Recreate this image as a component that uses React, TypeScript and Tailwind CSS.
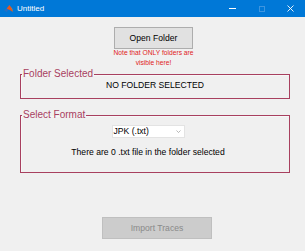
export default function App() {
  return (
    <div
      className="w-[305px] h-[251px] bg-[#f0f0f0] flex flex-col overflow-hidden"
      style={{ fontFamily: '"Liberation Sans", Arial, sans-serif' }}
    >
      {/* title bar */}
      <div className="h-[17px] bg-[#0078d7] flex items-center text-white">
        <svg className="ml-[4px] w-[9px] h-[9px]" viewBox="0 0 10 10">
          <path d="M0 7 L3 5 L5 6 L3 9 Z" fill="#2a6fc0" />
          <path d="M3 5 L6 1 L8 4 L10 9 L7 7 L5 6 Z" fill="#e8561e" />
          <path d="M6 1 L8 4 L10 9 L9 5 Z" fill="#f7a21b" />
        </svg>
        <span className="ml-[4px] text-[8px] leading-none">Untitled</span>
        <div className="ml-auto flex h-full">
          <div className="w-[29px] flex items-center justify-center">
            <div className="w-[7px] h-px bg-white" />
          </div>
          <div className="w-[29px] flex items-center justify-center">
            <div className="w-[6px] h-[6px] border border-[#3d95e0]" />
          </div>
          <div className="w-[29px] flex items-center justify-center">
            <svg className="w-[7px] h-[7px]" viewBox="0 0 7 7">
              <path d="M0.5 0.5 L6.5 6.5 M6.5 0.5 L0.5 6.5" stroke="white" strokeWidth="0.9" />
            </svg>
          </div>
        </div>
      </div>

      {/* open folder */}
      <button className="mt-[10px] ml-[114px] w-[79px] h-[22px] bg-[#e1e1e1] border border-[#adadad] text-[8.6px] text-black">
        Open Folder
      </button>
      <p className="mt-[-1px] ml-[104px] w-[99px] text-center text-[6.7px] leading-[10px] text-[#e01b1b]">
        Note that ONLY folders are
        <br />
        visible here!
      </p>

      {/* folder selected panel */}
      <fieldset className="ml-[20px] w-[270px] border border-[#a8405f] shadow-[inset_1px_1px_0_#f7f7f7] pb-[7px]">
        <legend className="ml-[1px] px-[1px] text-[10px] leading-[12px] text-[#a8405f]">Folder Selected</legend>
        <div className="text-center text-[8.6px] leading-[11px] text-black">NO FOLDER SELECTED</div>
      </fieldset>

      {/* select format panel */}
      <fieldset className="mt-[10px] ml-[20px] w-[270px] border border-[#a8405f] shadow-[inset_1px_1px_0_#f7f7f7] pb-[14px]">
        <legend className="ml-[1px] px-[1px] text-[10px] leading-[12px] text-[#a8405f]">Select Format</legend>
        <div className="w-[254px] flex flex-col items-center">
          <div className="mt-[4px] w-[73px] h-[13px] bg-white border border-[#e3e3e3] flex items-center justify-between pl-[1px] pr-[3px]">
            <span className="text-[8.6px] leading-none text-black">JPK (.txt)</span>
            <svg className="w-[5px] h-[3px]" viewBox="0 0 5 3">
              <path d="M0.5 0.5 L2.5 2.5 L4.5 0.5" fill="none" stroke="#9a9a9a" strokeWidth="0.7" />
            </svg>
          </div>
          <div className="mt-[9px] text-[8.6px] leading-[11px] text-black whitespace-nowrap">
            There are 0 .txt file in the folder selected
          </div>
        </div>
      </fieldset>

      {/* import button */}
      <button className="mt-[44px] ml-[102px] w-[110px] h-[22px] bg-[#cccccc] border border-[#bfbfbf] text-[8.6px] text-[#8a8a8a]">
        Import Traces
      </button>
    </div>
  );
}
